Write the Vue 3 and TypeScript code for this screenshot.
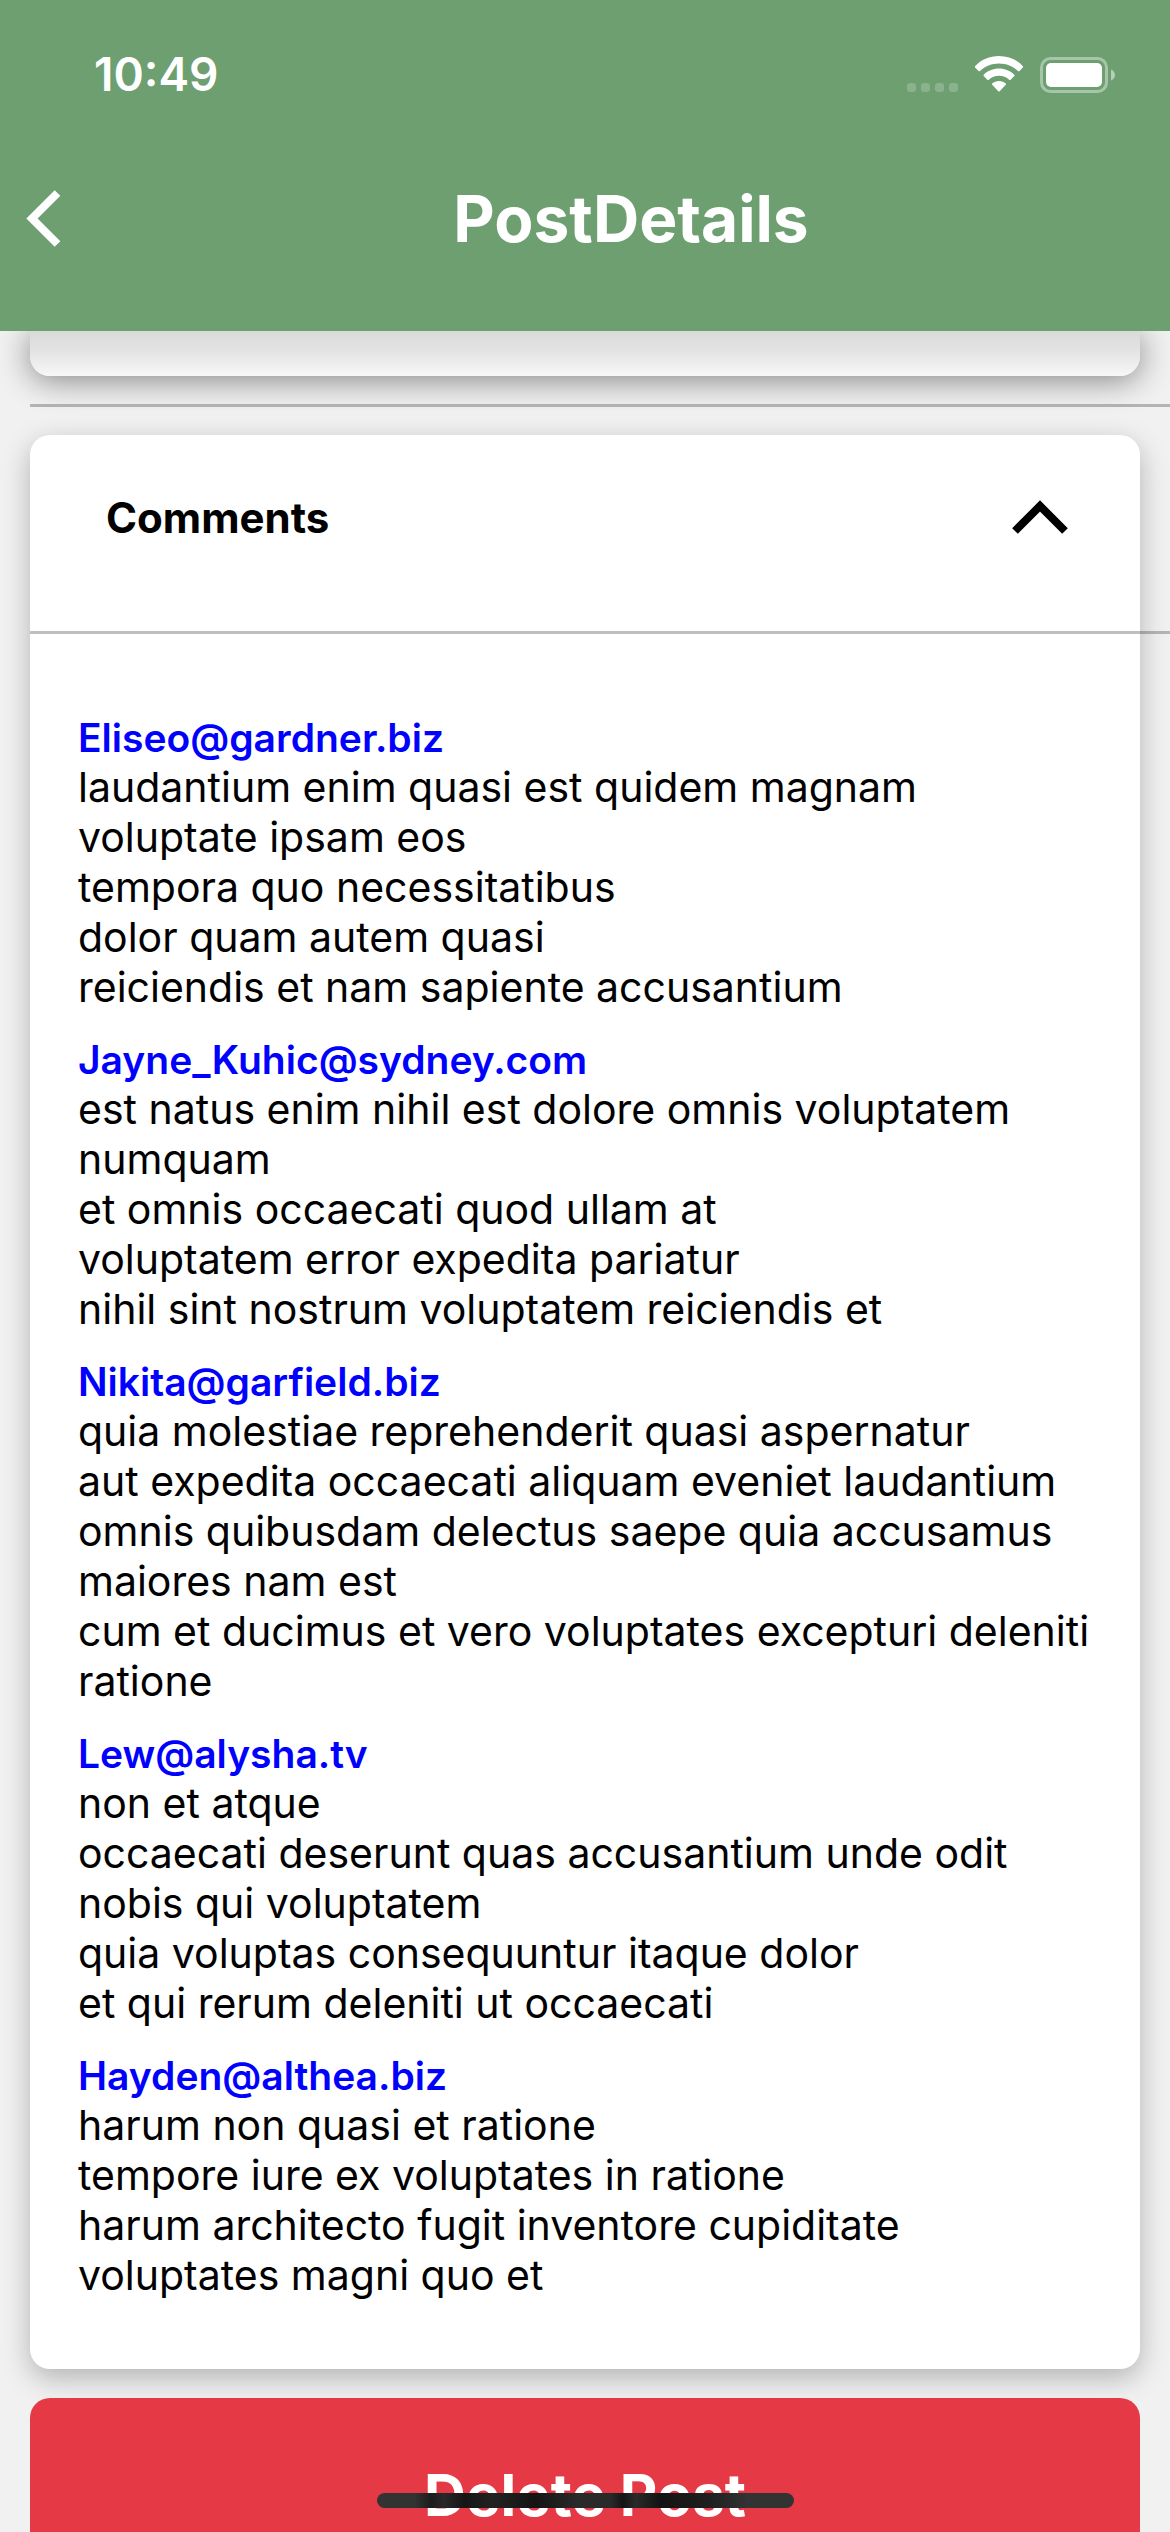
<script setup lang="ts">
import { ref } from 'vue'

interface PostComment {
  email: string
  body: string
}

const comments: PostComment[] = [
  {
    email: 'Eliseo@gardner.biz',
    body: 'laudantium enim quasi est quidem magnam\nvoluptate ipsam eos\ntempora quo necessitatibus\ndolor quam autem quasi\nreiciendis et nam sapiente accusantium',
  },
  {
    email: 'Jayne_Kuhic@sydney.com',
    body: 'est natus enim nihil est dolore omnis voluptatem\nnumquam\net omnis occaecati quod ullam at\nvoluptatem error expedita pariatur\nnihil sint nostrum voluptatem reiciendis et',
  },
  {
    email: 'Nikita@garfield.biz',
    body: 'quia molestiae reprehenderit quasi aspernatur\naut expedita occaecati aliquam eveniet laudantium\nomnis quibusdam delectus saepe quia accusamus\nmaiores nam est\ncum et ducimus et vero voluptates excepturi deleniti\nratione',
  },
  {
    email: 'Lew@alysha.tv',
    body: 'non et atque\noccaecati deserunt quas accusantium unde odit\nnobis qui voluptatem\nquia voluptas consequuntur itaque dolor\net qui rerum deleniti ut occaecati',
  },
  {
    email: 'Hayden@althea.biz',
    body: 'harum non quasi et ratione\ntempore iure ex voluptates in ratione\nharum architecto fugit inventore cupiditate\nvoluptates magni quo et',
  },
]

const expanded = ref(true)
</script>

<template>
  <div class="screen">
    <header class="header">
      <div class="status">
        <span class="time">10:49</span>
        <div class="indicators">
          <svg class="signal" viewBox="0 0 51 10" aria-hidden="true">
            <rect v-for="n in 4" :key="n" :x="(n - 1) * 14" y="0" width="9" height="9" rx="3" />
          </svg>
          <svg class="wifi" viewBox="0 0 48 37" aria-hidden="true">
            <path d="M24 0C33.400 0 41.900 3.700 48 10.200Q48.500 10.900 47.900 11.500L44.500 15Q43.700 15.700 42.900 14.900C37.900 10.100 31.300 7.400 24 7.400S10.100 10.100 5.100 14.900Q4.300 15.700 3.500 15L0.100 11.500Q-0.500 10.900 0 10.200C6.100 3.700 14.600 0 24 0Z" />
            <path d="M24 12.600C29.900 12.600 35.300 14.900 39.300 18.700Q39.900 19.400 39.300 20L35.700 23.700Q35 24.400 34.200 23.700C31.500 21.300 27.900 19.800 24 19.800S16.500 21.300 13.800 23.700Q13 24.400 12.300 23.700L8.700 20Q8.100 19.400 8.700 18.700C12.700 14.900 18.100 12.600 24 12.600Z" />
            <path d="M24 25C26.600 25 29 26 30.800 27.600Q31.400 28.200 30.800 28.800L24.700 35.200Q24 35.900 23.300 35.200L17.200 28.800Q16.600 28.200 17.200 27.600C19 26 21.400 25 24 25Z" />
          </svg>
          <svg class="battery" viewBox="0 0 76 36" aria-hidden="true">
            <rect class="shell" x="1.500" y="1.500" width="65" height="33" rx="9" />
            <rect x="6" y="6" width="56" height="24" rx="5" />
            <path class="nub" d="M71 12.500C76.300 14.500 76.300 21.500 71 23.500Z" />
          </svg>
        </div>
      </div>
      <nav class="nav">
        <button class="back" type="button" aria-label="Back">
          <svg viewBox="0 0 35 57" aria-hidden="true">
            <path d="M31.500 3L6 28.500L31.500 54" />
          </svg>
        </button>
        <h1 class="title">PostDetails</h1>
      </nav>
    </header>

    <main class="content">
      <section class="card post-end"></section>
      <hr class="rule" />
      <section class="card comments">
        <button class="toggle" type="button" :aria-expanded="expanded" @click="expanded = !expanded">
          <span>Comments</span>
          <svg :class="{ closed: !expanded }" viewBox="0 0 56 34" aria-hidden="true">
            <path d="M3 31L28 6L53 31" />
          </svg>
        </button>
        <hr class="rule inner" />
        <ul v-if="expanded" class="list">
          <li v-for="comment in comments" :key="comment.email">
            <h2 class="email">{{ comment.email }}</h2>
            <p class="body">{{ comment.body }}</p>
          </li>
        </ul>
      </section>
      <button class="delete" type="button">Delete Post</button>
    </main>
    <div class="home-bar"></div>
  </div>
</template>

<style>
body {
  margin: 0;
  background: #f1f1f1;
}
</style>

<style scoped>
.screen {
  display: flex;
  flex-direction: column;
  height: 100vh;
  overflow: hidden;
  position: relative;
  background: #f1f1f1;
  color: #000;
  font-family: Inter, "Liberation Sans", sans-serif;
}

button {
  border: 0;
  padding: 0;
  background: none;
  color: inherit;
  font-family: inherit;
  cursor: pointer;
}

.header {
  flex: none;
  background: #6d9f71;
  color: #fff;
}

.status {
  display: flex;
  align-items: center;
  justify-content: space-between;
  box-sizing: border-box;
  height: 148px;
  padding: 0 54px 0 94px;
}

.time {
  font-size: 46px;
  font-weight: 600;
}

.indicators {
  display: flex;
  align-items: flex-end;
  gap: 17px;
  fill: #fff;
}

.signal {
  width: 51px;
  height: 10px;
  opacity: 0.2;
}

.wifi {
  width: 48px;
  height: 37px;
}

.battery {
  width: 76px;
  height: 36px;
}

.shell {
  fill: none;
  stroke: #fff;
  stroke-width: 3;
  opacity: 0.4;
}

.nub {
  opacity: 0.5;
}

.nav {
  display: flex;
  align-items: center;
  height: 141px;
  padding-bottom: 42px;
}

.back {
  flex: none;
  display: flex;
  align-items: center;
  width: 92px;
  height: 92px;
  padding-left: 26px;
}

.back svg {
  width: 35px;
  height: 57px;
  fill: none;
  stroke: #fff;
  stroke-width: 8;
}

.title {
  flex: 1;
  margin: 0;
  font-size: 64px;
  font-weight: 700;
  text-align: center;
}

.content {
  flex: 1;
  min-height: 0;
  overflow: hidden;
  padding: 0 30px;
}

.card {
  background: #fff;
  border-radius: 20px;
  box-shadow: 0 9px 28px rgba(0, 0, 0, 0.26);
}

.post-end {
  height: 45px;
  border-radius: 0 0 20px 20px;
  background: linear-gradient(#dadada, #e2e2e2 40%, #f7f7f7);
  box-shadow: 0 4px 32px rgba(0, 0, 0, 0.46);
}

.rule {
  height: 3px;
  margin: 28px -30px 28px 0;
  border: 0;
  background: rgba(0, 0, 0, 0.25);
}

.toggle {
  display: flex;
  align-items: center;
  justify-content: space-between;
  width: 100%;
  height: 164px;
  padding: 0 72px 0 76px;
  font-size: 42px;
  font-weight: 700;
}

.toggle svg {
  width: 56px;
  height: 34px;
  fill: none;
  stroke: #000;
  stroke-width: 8;
}

.closed {
  transform: rotate(180deg);
}

.inner {
  margin: 32px -30px 0 0;
}

.list {
  display: flex;
  flex-direction: column;
  gap: 24px;
  margin: 0;
  padding: 80px 20px 69px 48px;
  list-style: none;
}

.email {
  margin: 0;
  color: #00f;
  font-size: 39px;
  font-weight: 600;
  line-height: 48px;
}

.body {
  margin: 0;
  font-size: 41px;
  line-height: 50px;
  white-space: pre-line;
}

.delete {
  display: block;
  width: 100%;
  height: 194px;
  margin-top: 29px;
  border-radius: 20px;
  position: relative;
  background: #e63946;
  color: #fff;
  font-size: 58px;
  font-weight: 700;
}

.home-bar {
  position: absolute;
  bottom: 24px;
  left: 50%;
  width: 417px;
  height: 15px;
  margin-left: -208px;
  border-radius: 8px;
  background: linear-gradient(90deg, #333 9%, #1c1c1c 13%, #292929 16%, #151515 21%, #222 28%, #141414 38%, #2a2a2a 48%, #2a2a2a 56%, #151515 59%, #2a2a2a 62%, #131313 68%, #202020 80%, #333 89%);
}
</style>
